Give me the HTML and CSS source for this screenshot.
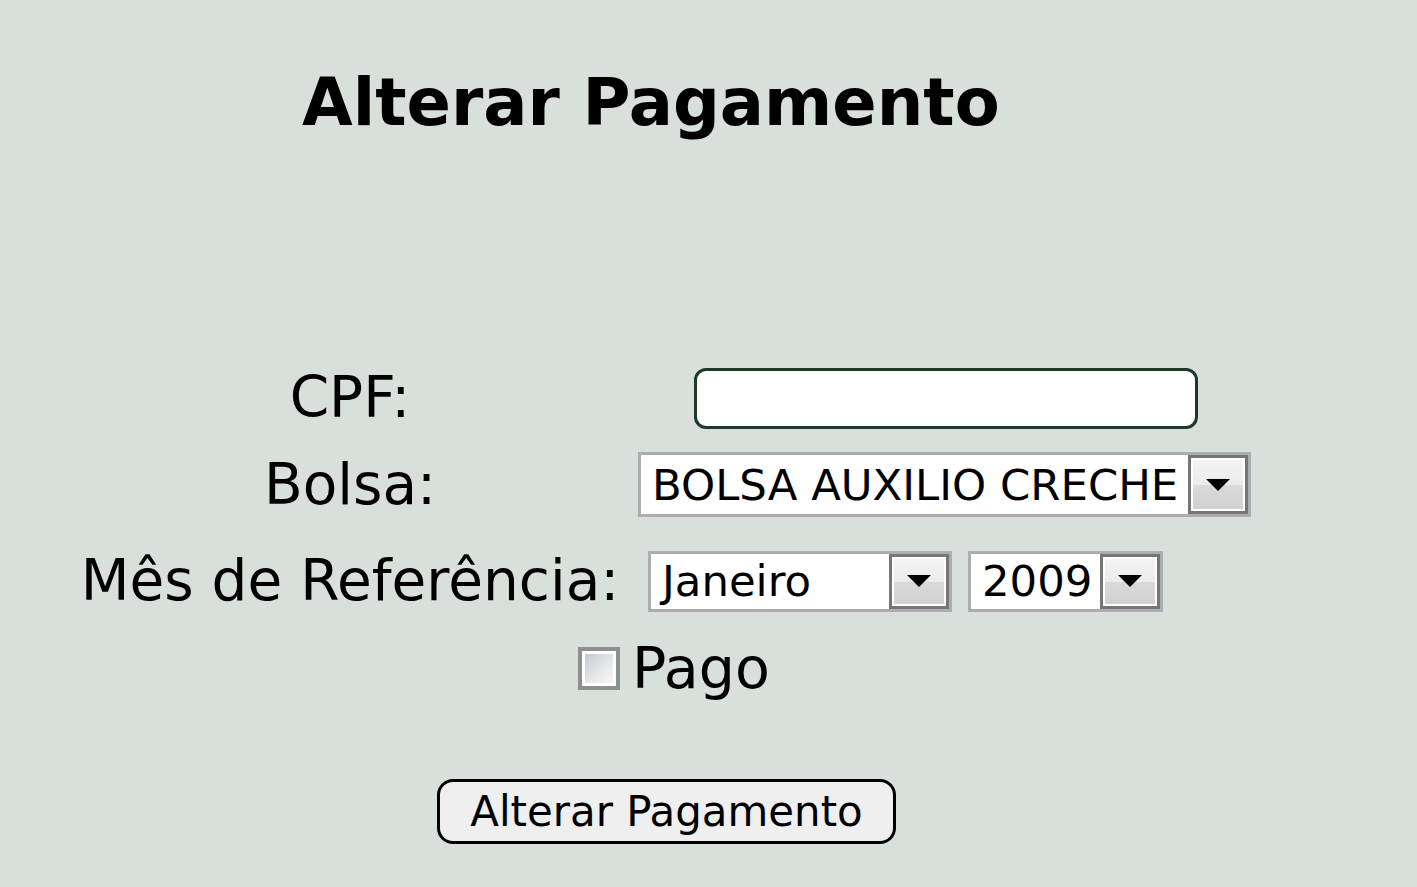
FILE: index.html
```html
<!DOCTYPE html>
<html lang="pt">
<head>
<meta charset="utf-8">
<title>Alterar Pagamento</title>
<link rel="stylesheet" href="styles.css">
</head>
<body>
<div class="page">
  <h1 class="title">Alterar Pagamento</h1>
  <form class="form">
    <div class="row row-cpf">
      <label class="label">CPF:</label>
      <div class="field field-cpf"><span class="text-input"></span></div>
    </div>
    <div class="row row-bolsa">
      <label class="label">Bolsa:</label>
      <div class="field field-bolsa">
        <div class="select select-bolsa"><span class="select-text">BOLSA AUXILIO CRECHE</span><span class="arrow"><i class="tri"></i></span></div>
      </div>
    </div>
    <div class="row row-mes">
      <label class="label">Mês de Referência:</label>
      <div class="field field-mes">
        <div class="select select-mes"><span class="select-text">Janeiro</span><span class="arrow"><i class="tri"></i></span></div>
        <div class="select select-ano"><span class="select-text">2009</span><span class="arrow"><i class="tri"></i></span></div>
      </div>
    </div>
    <div class="row-pago">
      <span class="checkbox"><span class="checkbox-inner"></span></span>
      <span class="pago-text">Pago</span>
    </div>
    <div class="row-button">
      <span class="button">Alterar Pagamento</span>
    </div>
  </form>
</div>
</body>
</html>
```
FILE: styles.css
```css
html, body {
  margin: 0;
  padding: 0;
  background: #d9dfdb;
  font-family: "DejaVu Sans", Verdana, sans-serif;
  color: #000;
}
.page {
  width: 1417px;
  height: 887px;
  overflow: hidden;
}
.title {
  margin: 0;
  padding: 70px 0 0 302px;
  font-size: 65.5px;
  line-height: 65px;
  font-weight: bold;
}
.form {
  display: flex;
  flex-direction: column;
  padding-top: 231px;
}
.row {
  display: flex;
  align-items: center;
  height: 64px;
}
.row-bolsa { margin-top: 22px; height: 65px; }
.row-mes { margin-top: 32px; }
.label {
  width: 548px;
  margin-left: 76px;
  text-align: center;
  font-size: 56.5px;
  line-height: 64px;
}
.field { display: flex; align-items: center; }
.field-cpf { margin-left: 70px; }
.field-bolsa { margin-left: 14px; }
.field-mes { margin-left: 24px; gap: 16px; }
.text-input {
  display: block;
  width: 498px;
  height: 55px;
  border: 3px solid #1c3a2a;
  border-radius: 12px;
  background: #fff;
}
.select {
  display: flex;
  align-items: stretch;
  border: 3px solid #abadb0;
  background: #fff;
  box-sizing: border-box;
}
.select-bolsa { width: 613px; height: 65px; }
.select-mes { width: 304px; height: 61px; }
.select-ano { width: 195px; height: 61px; }
.select-text {
  flex: 1;
  display: flex;
  align-items: center;
  padding-left: 11px;
  font-size: 43.4px;
  white-space: nowrap;
  overflow: hidden;
}
.arrow {
  width: 60px;
  box-sizing: border-box;
  border: 3px solid #767676;
  display: flex;
  align-items: center;
  justify-content: center;
  background: linear-gradient(#f3f3f3 0%, #ececec 50%, #dadada 51%, #cfcfcf 100%);
  box-shadow: inset 0 0 0 2px #fff;
}
.tri {
  display: block;
  width: 0;
  height: 0;
  border-left: 12px solid transparent;
  border-right: 12px solid transparent;
  border-top: 12px solid #000;
}
.row-pago {
  display: flex;
  align-items: center;
  margin-top: 23px;
  padding-left: 578px;
  height: 64px;
}
.checkbox {
  display: block;
  width: 42px;
  height: 43px;
  box-sizing: border-box;
  border: 4px solid #8f8f8f;
  background: #fff;
  padding: 3px;
}
.checkbox-inner {
  display: block;
  width: 100%;
  height: 100%;
  background: linear-gradient(135deg, #c5c8cf 0%, #e6e7ea 55%, #f6f6f6 100%);
}
.pago-text {
  margin-left: 12px;
  font-size: 57px;
  line-height: 64px;
}
.row-button {
  margin-top: 79px;
  padding-left: 437px;
}
.button {
  display: flex;
  align-items: center;
  justify-content: center;
  width: 459px;
  height: 65px;
  box-sizing: border-box;
  border: 3px solid #000;
  border-radius: 16px;
  background: #efefef;
  font-size: 41.9px;
}
```
